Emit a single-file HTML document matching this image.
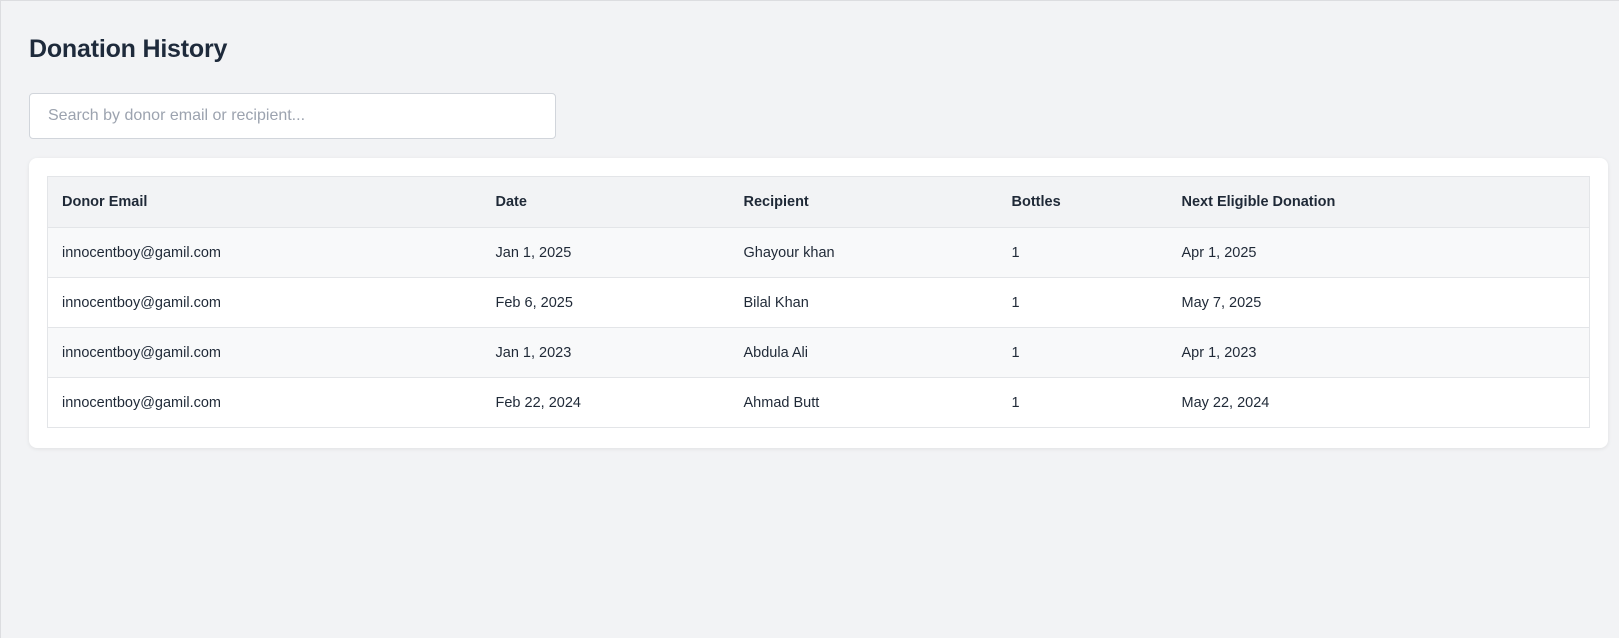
<!DOCTYPE html>
<html><head><meta charset="utf-8"><style>
*{box-sizing:border-box;margin:0;padding:0}
html,body{width:1619px;height:638px;overflow:hidden}
body{background:#f2f3f5;font-family:"Liberation Sans","DejaVu Sans",sans-serif;color:#1f2937;border-left:1px solid #dcdde0;border-top:1px solid #dcdde0;position:relative}
h1{position:absolute;left:28px;top:34px;font-size:25px;font-weight:bold;color:#1e2a3b;letter-spacing:-0.2px}
.search{position:absolute;left:28px;top:92px;width:527px;height:46px;background:#fff;border:1px solid #d1d5db;border-radius:4px;font-size:16px;color:#9ca3af;padding:13px 18px}
.card{position:absolute;left:28px;top:157px;width:1579px;height:290px;background:#fff;border-radius:8px;box-shadow:0 1px 4px rgba(0,0,0,.08)}
table{position:absolute;left:18px;top:18px;width:1543px;border-collapse:collapse;border:1px solid #e3e5e8;font-size:14.5px}
th{background:#f2f3f5;font-weight:bold;text-align:left;height:51px;color:#1f2937}
td{height:50px;border-top:1px solid #e3e5e8;color:#1f2937}
tr.alt td{background:#f8f9fa}
th,td{padding-left:14px}
</style></head><body>
<h1>Donation History</h1>
<div class="search">Search by donor email or recipient...</div>
<div class="card"><table>
<colgroup><col style="width:434px"><col style="width:248px"><col style="width:268px"><col style="width:170px"><col></colgroup>
<tr><th>Donor Email</th><th>Date</th><th>Recipient</th><th>Bottles</th><th>Next Eligible Donation</th></tr>
<tr class="alt"><td>innocentboy@gamil.com</td><td>Jan 1, 2025</td><td>Ghayour khan</td><td>1</td><td>Apr 1, 2025</td></tr>
<tr><td>innocentboy@gamil.com</td><td>Feb 6, 2025</td><td>Bilal Khan</td><td>1</td><td>May 7, 2025</td></tr>
<tr class="alt"><td>innocentboy@gamil.com</td><td>Jan 1, 2023</td><td>Abdula Ali</td><td>1</td><td>Apr 1, 2023</td></tr>
<tr><td>innocentboy@gamil.com</td><td>Feb 22, 2024</td><td>Ahmad Butt</td><td>1</td><td>May 22, 2024</td></tr>
</table></div>
</body></html>
